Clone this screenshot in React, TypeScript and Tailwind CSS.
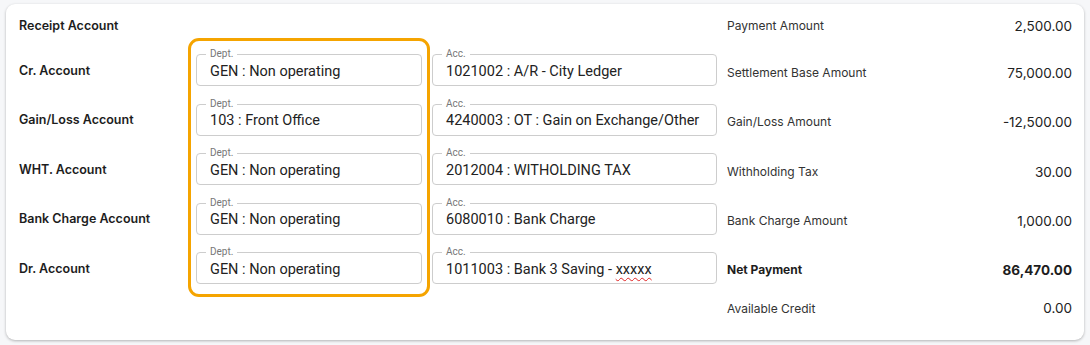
import React from 'react';

const leftLabels = ['Cr. Account', 'Gain/Loss Account', 'WHT. Account', 'Bank Charge Account', 'Dr. Account'];

const depts = ['GEN : Non operating', '103 : Front Office', 'GEN : Non operating', 'GEN : Non operating', 'GEN : Non operating'];

const accs = [
  '1021002 : A/R - City Ledger',
  '4240003 : OT : Gain on Exchange/Other',
  '2012004 : WITHOLDING TAX',
  '6080010 : Bank Charge',
];

const summary = [
  { label: 'Settlement Base Amount', value: '75,000.00' },
  { label: 'Gain/Loss Amount', value: '-12,500.00' },
  { label: 'Withholding Tax', value: '30.00' },
  { label: 'Bank Charge Amount', value: '1,000.00' },
];

const Field: React.FC<{ label: string; children: React.ReactNode }> = ({ label, children }) => (
  <div className="relative h-[32px] rounded-[4px] border border-[#cdcdcd] bg-white">
    <span className="absolute -top-[7px] left-[9px] bg-white px-[4px] text-[10px] leading-[12px] text-[#777]">
      {label}
    </span>
    <div className="flex h-full items-center pl-[13px] pt-[3px] text-[14.5px] text-[#222]">{children}</div>
  </div>
);

const App: React.FC = () => {
  return (
    <div className="h-[345px] w-[1090px] bg-[#f6f7f9] pl-[6px] pt-[4px]" style={{ fontFamily: 'Inter, sans-serif' }}>
      <div className="flex h-[336px] w-[1078px] rounded-[9px] bg-white shadow-[0_1px_3px_rgba(0,0,0,0.28)]">
        {/* Labels */}
        <div className="w-[182px] pl-[13px] pt-[9px] text-[12.5px] font-semibold text-[#1d1d1d]">
          <div className="flex h-[26px] items-center">Receipt Account</div>
          <div className="mt-[7.5px] flex flex-col">
            {leftLabels.map((l) => (
              <div key={l} className="flex h-[49.5px] items-center">{l}</div>
            ))}
          </div>
        </div>

        {/* Dept column */}
        <div className="pt-[34px]">
          <div
            className="flex h-[259px] w-[242px] flex-col gap-[17.5px] rounded-[11px] border-[3px] border-[#f5a400] px-[5px] pb-[10px] pt-[13px]"
            style={{ fontFamily: 'Roboto, sans-serif' }}
          >
            {depts.map((d, i) => (
              <Field key={i} label="Dept.">{d}</Field>
            ))}
          </div>
        </div>

        {/* Acc column */}
        <div
          className="ml-[2px] flex w-[285px] flex-col gap-[17.5px] pt-[50px]"
          style={{ fontFamily: 'Roboto, sans-serif' }}
        >
          {accs.map((a) => (
            <Field key={a} label="Acc.">{a}</Field>
          ))}
          <Field label="Acc.">
            1011003 : Bank 3 Saving -&nbsp;
            <span className="underline decoration-[#e02424] decoration-wavy decoration-1 underline-offset-[3px]">xxxxx</span>
          </Field>
        </div>

        {/* Summary */}
        <div className="ml-[10px] w-[345px] pt-[9px] text-[12px] text-[#333]">
          <div className="flex h-[26px] items-center justify-between">
            <span>Payment Amount</span>
            <span className="text-[13.5px] text-[#222]">2,500.00</span>
          </div>
          <div className="mt-[9px] flex flex-col">
            {summary.map((s) => (
              <div key={s.label} className="flex h-[49.5px] items-center justify-between">
                <span>{s.label}</span>
                <span className="text-[13.5px] text-[#222]">{s.value}</span>
              </div>
            ))}
            <div className="-mt-[1px] flex h-[49.5px] items-center justify-between font-bold text-[#1d1d1d]">
              <span>Net Payment</span>
              <span className="text-[13.5px]">86,470.00</span>
            </div>
            <div className="-mt-[1px] flex h-[30px] items-center justify-between">
              <span>Available Credit</span>
              <span className="text-[13.5px] text-[#222]">0.00</span>
            </div>
          </div>
        </div>
      </div>
    </div>
  );
};

export default App;
